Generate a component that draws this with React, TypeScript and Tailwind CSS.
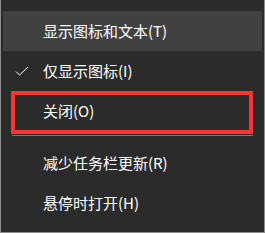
export default function App() {
  const font = { fontFamily: '"Noto Sans CJK SC", "Noto Sans", sans-serif' };
  return (
    <div
      className="w-[265px] h-[233px] bg-[#2b2b2b] border-x border-b border-[#8c8c8c] pt-[11px] text-[15px] text-white"
      style={font}
    >
      <div className="relative">
        {/* hovered item */}
        <div className="mx-[2px] h-[40px] bg-[#414141] flex items-center pl-[40px]">
          显示图标和文本(T)
        </div>

        {/* checked item */}
        <div className="h-[40px] flex items-center">
          <div className="w-[42px] flex justify-center">
            <svg width="14" height="10" viewBox="0 0 14 10" className="ml-[-1px]">
              <path d="M1 5.5 L4.5 9 L13 1" fill="none" stroke="#ffffff" strokeWidth="1" />
            </svg>
          </div>
          <span>仅显示图标(I)</span>
        </div>

        <div className="relative h-[40px] flex items-center pl-[42px]">
          关闭(O)
          <div className="absolute left-[10px] top-0 w-[242px] h-[43px] border-[4px] border-[#ff3333]" />
        </div>

        <div className="mx-[11px] mt-[4px] mb-[7px] h-px bg-[#7a7a7a]" />

        <div className="h-[40px] flex items-center pl-[42px]">减少任务栏更新(R)</div>
        <div className="h-[40px] flex items-center pl-[42px]">悬停时打开(H)</div>
      </div>
    </div>
  );
}
